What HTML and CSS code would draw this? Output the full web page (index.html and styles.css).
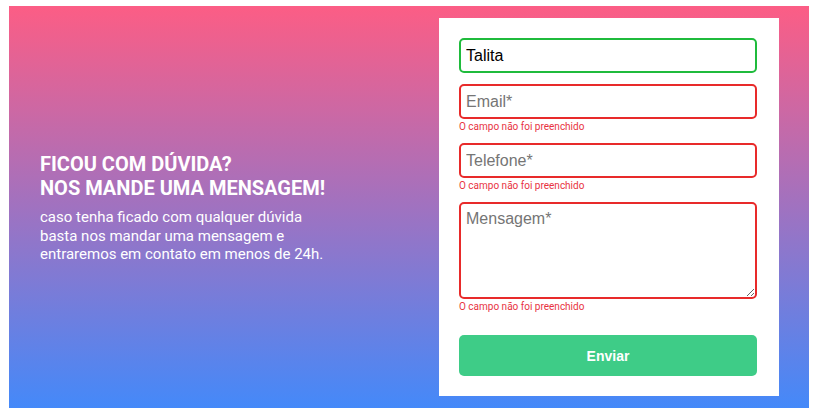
FILE: index.html
```html
<!DOCTYPE html>
<html lang="pt-BR">
<head>
<meta charset="utf-8">
<link rel="stylesheet" href="styles.css">
</head>
<body>
<section class="contact">
  <div class="intro">
    <h1 class="intro-title">Ficou com dúvida?<br>Nos mande uma mensagem!</h1>
    <p class="intro-text">caso tenha ficado com qualquer dúvida<br>basta nos mandar uma mensagem e<br>entraremos em contato em menos de 24h.</p>
  </div>
  <form class="card">
    <div class="field field-first">
      <input class="input input-ok" type="text" value="Talita">
    </div>
    <div class="field">
      <input class="input input-err" type="text" placeholder="Email*">
      <span class="error">O campo não foi preenchido</span>
    </div>
    <div class="field">
      <input class="input input-err" type="text" placeholder="Telefone*">
      <span class="error">O campo não foi preenchido</span>
    </div>
    <div class="field field-last">
      <textarea class="input input-err textarea" placeholder="Mensagem*"></textarea>
      <span class="error">O campo não foi preenchido</span>
    </div>
    <button class="submit" type="button">Enviar</button>
  </form>
</section>
</body>
</html>
```
FILE: styles.css
```css
html, body {
  margin: 0;
  padding: 0;
  background: #fff;
}
body {
  padding: 6px 7px 6px 9px;
  font-family: Roboto, "Liberation Sans", Arial, sans-serif;
}
.contact {
  height: 402px;
  box-sizing: border-box;
  display: flex;
  justify-content: space-between;
  align-items: stretch;
  padding: 12px 30px 12px 31px;
  background: linear-gradient(180deg, #fc5d85 0%, #a072c0 50%, #4489f9 100%);
}
.intro {
  display: flex;
  flex-direction: column;
  justify-content: center;
  color: #fff;
  padding-top: 2px;
}
.intro-title {
  margin: 0 0 8px;
  font-size: 20px;
  line-height: 24px;
  font-weight: 700;
  text-transform: uppercase;
  letter-spacing: 0;
}
.intro-text {
  margin: 0;
  font-size: 15px;
  line-height: 18.5px;
  font-weight: 400;
}
.card {
  width: 340px;
  box-sizing: border-box;
  background: #fff;
  padding: 20px 22px 20px 20px;
  display: flex;
  flex-direction: column;
}
.field {
  display: flex;
  flex-direction: column;
  margin-bottom: 11px;
}
.field-first {
  margin-bottom: 11px;
}
.field-last {
  margin-bottom: 23px;
}
.input {
  box-sizing: border-box;
  width: 100%;
  height: 35px;
  border: 2px solid #e82a2a;
  border-radius: 5px;
  padding: 0 5px;
  font-family: "Liberation Sans", Arial, sans-serif;
  font-size: 16px;
  color: #000;
  background: #fff;
  outline: none;
}
.input::placeholder {
  color: #757575;
}
.input-ok {
  border-color: #1fbb3c;
}
.textarea {
  height: 97px;
  padding: 6px 5px;
  resize: vertical;
}
.error {
  margin-top: 2px;
  font-size: 10px;
  line-height: 11px;
  color: #e8333f;
}
.submit {
  height: 41px;
  border: 0;
  border-radius: 5px;
  background: #3ecc87;
  color: #fff;
  font-family: "Liberation Sans", Arial, sans-serif;
  font-weight: 700;
  font-size: 14px;
}
```
